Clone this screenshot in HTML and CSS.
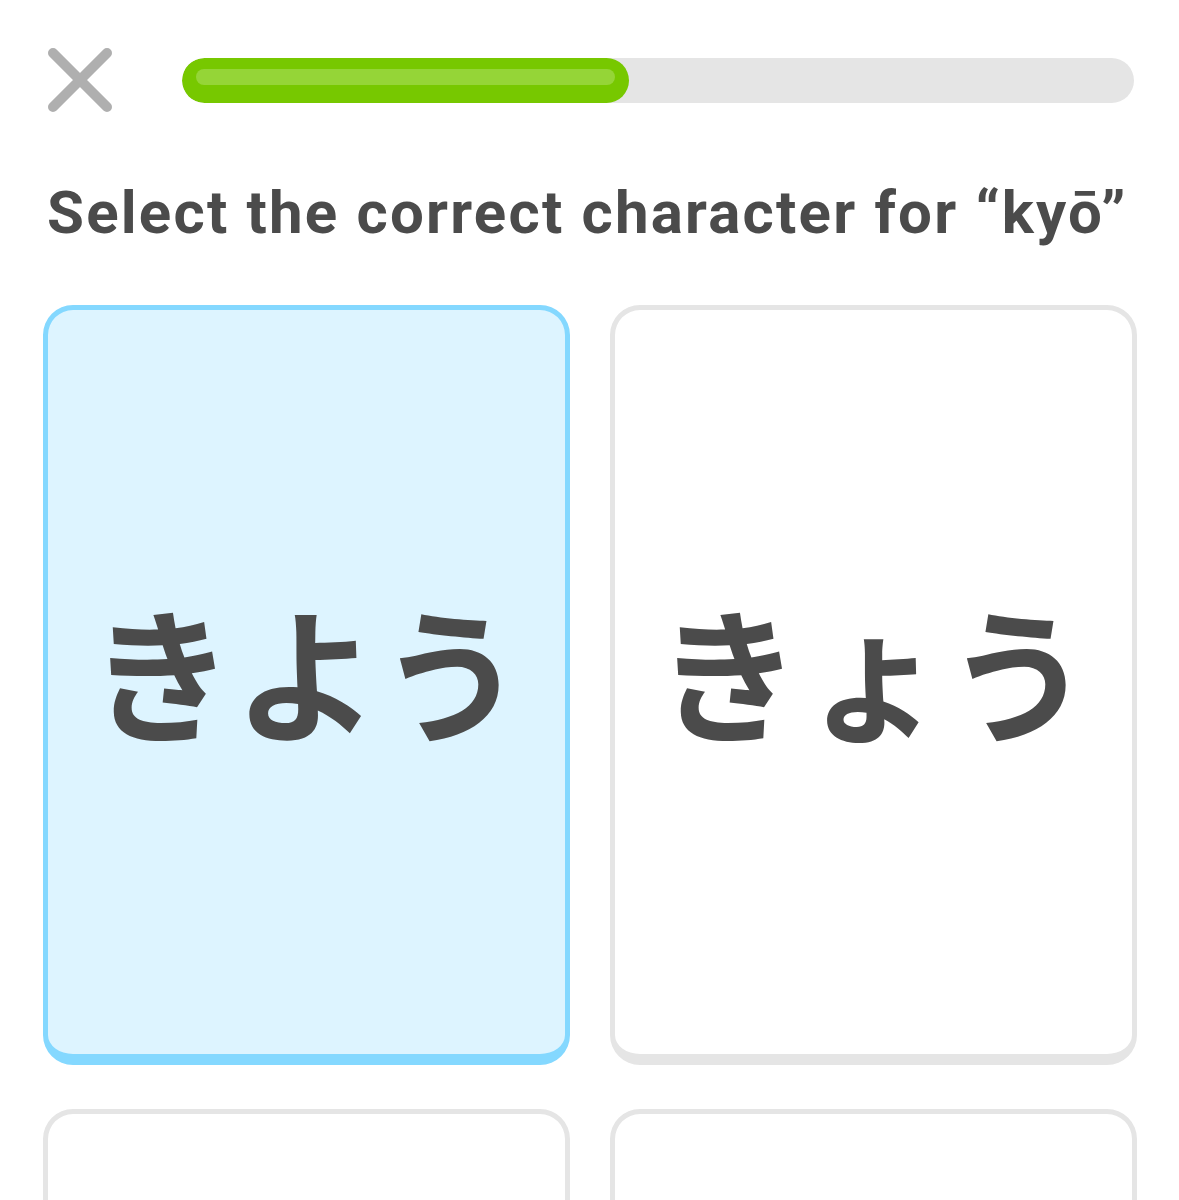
FILE: index.html
```html
<!DOCTYPE html>
<html lang="en">
<head>
<meta charset="utf-8">
<title>Select the correct character</title>
<link rel="stylesheet" href="styles.css">
</head>
<body>
<div class="page">
  <header class="topbar">
    <svg class="close" width="66" height="66" viewBox="0 0 66 66" aria-label="Close">
      <path d="M6 6 L60 60 M60 6 L6 60" stroke="#afafaf" stroke-width="10" stroke-linecap="round" fill="none"/>
    </svg>
    <div class="progress">
      <div class="progress-fill" style="width:47%"><div class="progress-shine"></div></div>
    </div>
  </header>
  <h1 class="title">Select the correct character for “kyō”</h1>
  <div class="grid">
    <div class="card selected"><span class="kana">きよう</span></div>
    <div class="card"><span class="kana">きょう</span></div>
    <div class="card"></div>
    <div class="card"></div>
  </div>
</div>
</body>
</html>
```
FILE: styles.css
```css
html, body {
  margin: 0;
  padding: 0;
  background: #ffffff;
}
.page {
  padding: 0 42px 0 43px;
  font-family: Roboto, "Noto Sans", sans-serif;
  color: #4b4b4b;
}
.topbar {
  display: flex;
  align-items: center;
  padding-top: 47px;
  height: 66px;
}
.close {
  flex: none;
  margin-left: 4px;
}
.progress {
  flex: 1;
  height: 45px;
  margin-left: 69px;
  margin-right: 3px;
  border-radius: 23px;
  background: #e5e5e5;
  overflow: hidden;
}
.progress-fill {
  height: 45px;
  border-radius: 23px;
  background: #77c800;
  padding: 11px 14px 0;
  box-sizing: border-box;
}
.progress-shine {
  height: 16px;
  border-radius: 8px;
  background: #95d537;
}
.title {
  margin: 64px 0 0 4px;
  font-size: 60px;
  font-weight: 700;
  line-height: 72px;
  letter-spacing: 2.2px;
  color: #4b4b4b;
  white-space: nowrap;
}
.grid {
  display: grid;
  grid-template-columns: 1fr 1fr;
  column-gap: 40px;
  row-gap: 44px;
  margin-top: 56px;
}
.card {
  height: 760px;
  box-sizing: border-box;
  border: 5px solid #e5e5e5;
  border-bottom-width: 11px;
  border-radius: 30px;
  background: #ffffff;
  display: flex;
  align-items: center;
  justify-content: center;
}
.card.selected {
  border-color: #84d8ff;
  background: #ddf4ff;
}
.kana {
  font-family: "Noto Sans CJK JP", sans-serif;
  font-size: 145px;
  font-weight: 700;
  color: #4b4b4b;
  line-height: 1;
  margin-bottom: 26px;
}
```
